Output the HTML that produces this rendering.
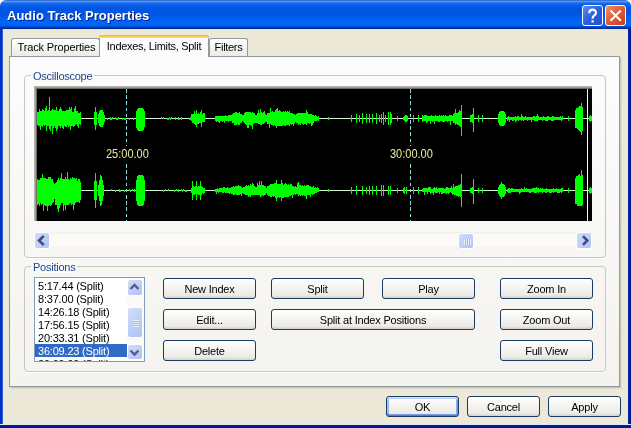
<!DOCTYPE html>
<html><head><meta charset="utf-8">
<style>
*{margin:0;padding:0;box-sizing:border-box}
html,body{width:631px;height:428px;overflow:hidden;background:#FFFFFF;font-family:"Liberation Sans",sans-serif;font-size:11px;color:#000}
.a{position:absolute}
#win{position:absolute;left:0;top:0;width:631px;height:428px;background:transparent;will-change:transform}
#title{left:0;top:0;width:631px;height:29px;border-radius:6px 6px 0 0;
 background:linear-gradient(to bottom,#14409E 0px,#5BA0FF 1px,#3C8AF8 2px,#166CF0 3px,#0A5FE8 5px,#0055E3 8px,#0055E3 14px,#0060F2 19px,#0066FB 23px,#005DF0 26px,#0045C4 27px,#002F9C 28px,#002F9C 29px)}
#ttext{left:7px;top:8px;color:#fff;font-weight:bold;font-size:13px;letter-spacing:0px;text-shadow:1px 1px 0 #0A1E78;white-space:nowrap}
#body{left:4px;top:29px;width:623px;height:395px;background:#ECE9D8;border-top:1px solid #D8E4F8}
#lb{left:0;top:29px;width:4px;height:399px;background:linear-gradient(to right,#0032C4 0,#0036C8 2px,#2E5CD6 2px,#2E5CD6 3px,#D8ECFC 3px)}
#rb{left:627px;top:29px;width:4px;height:399px;background:linear-gradient(to right,#DCEBFC 0,#DCEBFC 1px,#0A2AB0 1px,#0A22A0 2px,#001A90 3px)}
#bb{left:0;top:424px;width:631px;height:4px;background:linear-gradient(to bottom,#DCEBFC 0,#DCEBFC 1px,#0A1E90 1px,#001884 4px)}
.tbtn{width:21px;height:21px;border:1px solid #fff;border-radius:3px}
.tab{letter-spacing:-0.3px;height:18px;border:1px solid #919B9C;border-bottom:none;border-radius:3px 3px 0 0;background:linear-gradient(#FFFFFF,#F3F3EF 60%,#ECEBE5);text-align:center;white-space:nowrap;padding-top:2px}
#panel{left:9px;top:56px;width:611px;height:331px;border:1px solid #919B9C;box-shadow:1px 1px 0 #C9C7BD,2px 2px 0 #DEDCD0;background:linear-gradient(to bottom,#FCFCFE,#F4F3EE)}
.grp{border:1px solid #C9C7BA;border-radius:4px;box-shadow:0 1px 0 #FFFFFF}
.glabel{color:#1E4590;background:#FAFAF9;padding:0 2px 0 2px;white-space:nowrap;letter-spacing:-0.25px}
.btn{height:21px;border:1px solid #1C3A62;border-radius:3px;background:linear-gradient(to bottom,#FFFFFF,#F5F5F2 40%,#ECEBE6 85%,#D6D0C5);text-align:center;white-space:nowrap;line-height:21px;letter-spacing:-0.2px}
.sbb{width:15px;height:17px;border:1px solid #fff;border-radius:3px;background:linear-gradient(135deg,#D0DDFB,#BCCDF8 60%,#AFC3F2)}
.lst{height:13px;line-height:15px;padding-left:3px;position:relative;top:1px;white-space:nowrap;letter-spacing:-0.2px}
.sel{background:#316AC5;color:#fff}
.def{border-color:#1C3A62;box-shadow:inset 0 1px 0 #CCE0FA,inset 0 2px 0 #BCD4F8,inset 0 -1px 0 #5A78D8,inset 0 -2px 0 #7E9AE6,inset 1px 0 0 #A8C6F4,inset 2px 0 0 #98B8F0,inset -1px 0 0 #7090E4,inset -2px 0 0 #90AEEC}
.tl{color:#ECEC9C;font-size:11px;white-space:nowrap;line-height:13px;transform:scaleY(1.13);transform-origin:0 0;will-change:transform}
</style></head><body>
<div id="win">
 <div id="title" class="a"></div>
 <div id="ttext" class="a">Audio Track Properties</div>
 <div class="a tbtn" style="left:582px;top:5px;background:linear-gradient(135deg,#5C8CF2,#2A5FE0 50%,#2050D0)"><svg width="19" height="19" style="position:absolute;left:0;top:0"><path d="M6.2 7.2C6.2 4.8 7.8 3.6 9.6 3.6C11.6 3.6 13 4.8 13 6.7C13 8.4 11.8 9.1 10.8 9.8C10 10.3 9.6 10.9 9.6 12.2V12.8" stroke="#fff" stroke-width="2.1" fill="none"/><rect x="8.5" y="14.3" width="2.2" height="2.2" fill="#fff"/></svg></div>
 <div class="a tbtn" style="left:605px;top:5px;background:linear-gradient(135deg,#F09070,#E05A30 50%,#C84020)"><svg width="19" height="19" style="position:absolute;left:0;top:0"><path d="M4.5 4.5L14.8 14.8M14.8 4.5L4.5 14.8" stroke="#fff" stroke-width="2.1" fill="none"/></svg></div>
 <div id="lb" class="a"></div><div id="rb" class="a"></div><div id="bb" class="a"></div>
 <div id="body" class="a"></div>
 <div id="panel" class="a"></div>
 <div class="a tab" style="left:11px;top:38px;width:89px;letter-spacing:-0.15px;padding-left:2px">Track Properties</div>
 <div class="a tab" style="left:209px;top:38px;width:39px;">Filters</div>
 <div class="a" style="left:99px;top:35px;width:110px;height:22px;background:#FCFCFE;border-left:1px solid #919B9C;border-right:1px solid #919B9C;border-radius:3px 3px 0 0"></div><div class="a" style="left:99px;top:35px;width:110px;height:3px;border-radius:3px 3px 0 0;background:linear-gradient(to bottom,#F2B56A 0,#F2B56A 1px,#F8C848 1px,#F8C848 2px,#FAD98A 2px)"></div><div class="a" style="left:100px;top:40px;width:108px;text-align:center;white-space:nowrap;letter-spacing:-0.3px">Indexes, Limits, Split</div>

 <!-- Oscilloscope group -->
 <div class="a grp" style="left:24px;top:75px;width:582px;height:183px"></div>
 <div class="a glabel" style="left:31px;top:70px;">Oscilloscope</div>
 <div class="a" style="left:34px;top:86px;width:558px;height:135px;border-top:1px solid #B4B3AC;border-left:1px solid #B4B3AC;background:#000;box-shadow:inset 1px 1px 0 #9C9B94,inset 2px 2px 0 #6E6D68"></div>
 <div id="scope" class="a" style="left:37px;top:89px;width:555px;height:132px;overflow:hidden"><svg width="555" height="132" style="position:absolute;left:0;top:0" shape-rendering="crispEdges">
<path d="M0 29.5H555M0 101.5H555" stroke="#D4F2D4" stroke-width="1"/>
<path d="M0 23v13M1 23v14M2 20v17M3 22v19M4 22v15M5 20v18M6 21v15M7 22v15M8 19v17M9 17v25M10 22v15M11 21v16M12 8v32M13 22v20M14 21v16M15 20v25M16 21v18M17 21v16M18 21v18M19 18v24M20 22v18M21 22v15M22 20v17M23 18v21M24 20v17M25 22v17M26 22v18M27 22v15M28 22v16M29 21v17M30 21v15M31 21v17M32 18v19M33 20v21M34 18v19M35 23v14M36 23v15M37 19v18M38 17v19M39 22v13M40 22v15M41 24v15M42 24v11M43 23v13M57 23v13M58 18v23M59 23v13M61 25v9M62 22v15M63 21v17M64 21v17M65 21v17M66 23v13M67 26v7M70 29v2M73 28v3M74 29v2M75 28v2M78 28v2M79 29v2M80 29v2M81 28v2M85 29v2M87 29v2M88 29v2M92 29v2M96 29v2M99 22v17M100 20v21M101 19v23M102 19v23M103 19v23M104 19v23M105 19v23M106 20v21M107 22v16M124 28v2M126 28v2M130 29v2M131 29v2M132 28v2M133 29v2M134 28v2M138 28v3M141 28v3M142 29v2M144 28v3M152 29v2M153 28v3M154 25v7M155 25v9M156 25v9M157 22v13M158 25v11M159 21v17M160 25v10M161 24v11M162 25v9M163 23v11M164 21v17M165 25v8M166 24v9M167 24v9M178 27v5M179 27v6M180 27v5M181 27v6M182 27v7M183 27v5M184 27v5M185 27v6M186 27v5M187 27v7M188 26v6M189 27v5M190 27v5M191 26v7M192 26v6M193 26v6M194 26v6M195 25v9M196 24v10M197 24v12M198 23v13M199 23v13M200 24v11M201 24v12M202 23v13M203 25v9M204 25v9M205 26v6M206 26v7M207 24v10M208 23v12M209 23v13M210 23v16M211 23v16M212 23v13M213 23v13M214 24v13M215 23v17M216 24v11M217 24v10M218 26v8M219 26v8M220 24v10M221 21v14M222 24v11M223 20v16M224 23v13M225 24v11M226 23v12M227 22v12M228 25v8M229 26v7M230 24v11M231 24v11M232 24v15M233 19v16M234 23v13M235 22v14M236 23v14M237 23v13M238 21v16M239 20v19M240 19v18M241 22v15M242 21v16M243 22v15M244 23v14M245 23v14M246 22v14M247 23v14M248 22v15M249 23v13M250 22v14M251 23v13M252 22v15M253 24v11M254 24v12M255 24v11M256 25v12M257 25v10M258 26v7M259 25v9M260 24v10M261 24v12M262 24v11M263 24v12M264 24v10M265 24v11M266 24v12M267 24v11M268 24v11M269 21v15M270 23v11M271 25v9M272 25v10M273 25v9M274 25v12M275 26v10M276 26v8M277 27v5M278 26v6M279 27v5M280 28v3M281 27v5M291 28v3M314 26v7M319 25v9M322 26v7M325 24v11M329 25v9M332 25v9M335 25v9M339 24v11M342 26v7M344 25v9M346 23v13M348 26v7M351 23v13M353 23v13M354 25v9M360 27v5M366 28v3M367 27v5M368 26v7M369 26v7M370 27v5M376 26v7M381 26v7M385 26v7M386 27v5M387 26v6M388 26v6M389 26v8M390 27v6M391 27v5M392 27v5M393 27v8M394 26v6M395 27v6M396 27v5M397 27v8M398 26v6M399 27v5M400 27v5M401 27v6M402 26v7M403 27v5M404 26v6M405 27v6M406 26v7M407 27v6M408 26v6M409 27v5M410 27v6M411 27v5M412 26v6M413 26v10M414 26v6M415 27v5M416 25v9M417 24v10M418 20v16M419 24v11M420 24v12M421 23v13M422 21v16M423 22v16M424 16v31M433 26v7M434 26v7M435 25v9M436 19v24M441 26v7M445 26v7M461 25v9M462 23v13M463 22v15M464 22v15M465 22v15M466 22v15M467 23v13M468 25v9M470 28v4M471 27v4M472 28v5M473 28v3M474 28v3M475 28v4M476 28v4M477 28v3M478 27v6M479 28v4M480 27v4M481 27v5M482 28v3M483 28v3M484 25v7M485 27v4M486 28v4M487 28v3M488 27v4M489 28v3M490 28v4M491 28v3M492 28v3M493 28v3M494 28v5M495 28v3M496 27v4M497 27v5M498 28v4M499 27v5M500 25v7M501 27v4M502 28v3M503 28v3M504 28v3M505 28v4M506 27v4M507 28v3M508 28v4M509 28v4M510 27v5M511 27v4M512 28v3M513 28v3M514 28v4M515 27v5M516 27v5M517 28v3M518 28v3M519 28v3M520 28v3M521 28v3M522 28v3M523 27v4M524 28v4M525 27v4M531 27v5M538 21v18M539 19v20M540 19v21M541 18v23M542 17v25M543 17v26M544 14v32M545 18v24M552 27v5M553 26v7M554 27v5M0 90v26M1 91v24M2 91v26M3 89v25M4 89v27M5 85v30M6 89v33M7 89v27M8 89v28M9 90v27M10 90v32M11 88v29M12 88v28M13 88v29M14 90v26M15 90v24M16 93v20M17 95v15M18 94v22M19 93v23M20 91v29M21 89v34M22 91v28M23 89v27M24 84v30M25 90v24M26 90v32M27 90v26M28 88v33M29 90v26M30 83v33M31 90v26M32 91v24M33 89v25M34 90v26M35 88v27M36 89v32M37 89v27M38 90v24M39 89v24M40 92v21M41 90v23M42 90v24M43 93v18M57 92v19M58 84v35M59 92v19M61 96v11M62 91v21M63 86v31M64 87v29M65 91v21M66 96v11M74 100v2M78 101v2M82 100v3M83 101v2M87 101v2M92 100v2M93 101v2M95 100v2M97 100v3M99 91v21M100 87v29M101 86v31M102 86v31M103 86v31M104 86v31M105 86v31M106 87v29M107 91v21M126 101v2M128 100v2M131 100v2M137 101v2M139 100v2M141 100v3M144 100v2M145 101v2M146 100v2M148 101v2M149 101v2M154 99v5M155 92v19M156 97v9M157 98v8M158 97v8M159 92v19M160 98v7M161 97v9M162 97v9M163 92v19M164 97v9M165 98v6M166 99v6M167 99v5M178 100v3M179 100v5M180 99v4M181 100v4M182 99v4M183 99v4M184 99v4M185 99v5M186 98v6M187 98v5M188 99v5M189 99v5M190 98v6M191 99v5M192 99v6M193 99v5M194 98v7M195 98v7M196 97v9M197 98v8M198 97v8M199 97v9M200 97v9M201 96v10M202 97v9M203 97v8M204 98v9M205 99v5M206 98v7M207 98v7M208 97v9M209 96v10M210 97v9M211 96v12M212 97v10M213 95v13M214 96v10M215 94v12M216 95v11M217 97v9M218 98v8M219 98v8M220 94v12M221 96v10M222 92v14M223 96v12M224 92v15M225 96v10M226 96v11M227 97v9M228 97v9M229 99v5M230 97v9M231 97v10M232 96v11M233 95v13M234 95v13M235 95v12M236 95v13M237 94v13M238 94v15M239 91v21M240 95v14M241 95v13M242 95v14M243 95v13M244 91v21M245 94v15M246 96v13M247 95v13M248 94v14M249 95v13M250 96v12M251 95v13M252 96v11M253 95v12M254 95v11M255 97v12M256 97v9M257 98v7M258 97v9M259 98v7M260 94v11M261 93v14M262 96v10M263 96v11M264 97v9M265 96v11M266 97v9M267 96v11M268 97v10M269 96v14M270 96v10M271 96v10M272 97v9M273 97v11M274 98v7M275 98v8M276 97v8M277 99v6M278 98v6M279 99v5M280 98v5M281 99v4M291 100v3M314 98v7M319 97v9M325 97v9M329 98v7M332 97v9M335 97v9M339 97v9M344 96v11M346 96v11M351 97v9M353 97v9M360 99v5M366 99v5M367 98v7M369 98v7M376 98v7M381 98v7M385 100v3M386 99v4M387 99v7M388 99v4M389 99v4M390 99v6M391 98v5M392 98v5M393 98v7M394 100v4M395 100v4M396 99v7M397 98v5M398 99v5M399 98v6M400 100v4M401 99v4M402 99v6M403 99v4M404 99v6M405 99v6M406 99v5M407 100v4M408 99v5M409 98v7M410 98v6M411 99v6M412 99v5M413 99v4M414 97v7M415 99v7M416 95v10M417 98v8M418 97v9M419 97v10M420 97v10M421 96v12M422 96v11M423 95v13M424 85v33M433 99v5M434 99v5M435 98v7M436 90v25M441 99v5M445 99v5M461 98v7M462 96v11M463 95v13M464 93v17M465 95v13M466 95v13M467 96v11M468 98v7M470 100v3M471 99v5M472 99v5M473 100v4M474 99v4M475 99v4M476 100v3M477 100v3M478 100v3M479 100v3M480 100v3M481 100v3M482 100v5M483 100v4M484 99v4M485 100v3M486 100v3M487 98v5M488 100v3M489 99v4M490 100v3M491 100v3M492 100v4M493 100v4M494 100v3M495 99v4M496 99v4M497 99v5M498 99v5M499 98v6M500 99v4M501 99v5M502 100v3M503 99v4M504 100v3M505 99v5M506 100v3M507 100v3M508 100v4M509 99v5M510 100v3M511 100v3M512 100v4M513 100v4M514 100v4M515 100v3M516 99v5M517 100v3M518 100v3M519 99v4M520 100v4M521 100v4M522 100v4M523 100v3M524 99v5M525 99v4M531 99v5M538 89v26M539 87v28M540 87v30M541 86v31M542 85v32M543 87v30M544 81v36M545 86v30M552 99v5M553 98v7M554 99v5" stroke="#00FF00" stroke-width="1" transform="translate(0.5 0)"/>
<path d="M89.5 0V57M89.5 75V132M373.5 0V57M373.5 75V132" stroke="#8ED8DC" stroke-width="1" stroke-dasharray="3.5 2.7"/>
<path d="M550.5 0V132" stroke="#F4F4F4" stroke-width="1"/>
</svg>
  <div class="a tl" style="left:69px;top:58px">25:00.00</div>
  <div class="a tl" style="left:353px;top:58px">30:00.00</div>
 </div>
 <!-- scrollbar -->
 <div class="a" style="left:35px;top:232px;width:557px;height:17px;background:linear-gradient(to bottom,#F1EFE6,#FBFAF6 3px,#FBFAF6 14px,#F2F1EA)"></div>
 <div class="a sbb" style="left:34px;top:232px;width:16px"><svg width="15" height="17" style="position:absolute;left:0;top:0"><path d="M8.8 3 L4 7.5 L8.8 12" stroke="#3F4F7C" stroke-width="2.6" fill="none"/></svg></div>
 <div class="a sbb" style="left:458px;top:233px;width:16px;height:16px"><svg width="16" height="16"><path d="M5.5 5V11M7.5 5V11M9.5 5V11M11.5 5V11" stroke="#EEF4FE" stroke-width="1"/><path d="M6.5 5V11M8.5 5V11M10.5 5V11" stroke="#9DB4E8" stroke-width="1"/></svg></div>
 <div class="a sbb" style="left:576px;top:232px;width:16px"><svg width="15" height="17" style="position:absolute;left:0;top:0"><path d="M6 3.2 L10.3 7.5 L6 11.8" stroke="#3F4F7C" stroke-width="2.6" fill="none"/></svg></div>
 <!-- Positions group -->
 <div class="a grp" style="left:24px;top:266px;width:582px;height:106px"></div>
 <div class="a glabel" style="left:31px;top:261px;">Positions</div>
 <div class="a" style="left:34px;top:277px;width:111px;height:85px;border:1px solid #7F9DB9;background:#fff;overflow:hidden">
  <div class="lst">5:17.44 (Split)</div>
  <div class="lst">8:37.00 (Split)</div>
  <div class="lst">14:26.18 (Split)</div>
  <div class="lst">17:56.15 (Split)</div>
  <div class="lst">20:33.31 (Split)</div>
  <div class="lst sel">36:09.23 (Split)</div>
  <div class="lst">39:09.99 (Split)</div>
 </div>
 <div class="a" style="left:127px;top:278px;width:17px;height:83px;background:#FBFAF6"></div>
 <div class="a sbb" style="left:127px;top:279px;width:16px;height:17px"><svg width="16" height="17" style="position:absolute;left:-1px;top:-1px"><path d="M3.5 10 L7.5 6 L11.5 10" stroke="#4D6185" stroke-width="2.4" fill="none"/></svg></div>
 <div class="a sbb" style="left:127px;top:307px;width:16px;height:31px"><svg width="16" height="31"><path d="M5 12.5H11M5 14.5H11M5 16.5H11M5 18.5H11" stroke="#EEF4FE" stroke-width="1"/><path d="M5 13.5H11M5 15.5H11M5 17.5H11" stroke="#9DB4E8" stroke-width="1"/></svg></div>
 <div class="a sbb" style="left:127px;top:344px;width:16px;height:16px"><svg width="16" height="16" style="position:absolute;left:-1px;top:-1px"><path d="M3.5 6.5 L7.5 10.5 L11.5 6.5" stroke="#4D6185" stroke-width="2.4" fill="none"/></svg></div>
 <div class="a btn" style="left:163px;top:278px;width:93px;">New Index</div>
 <div class="a btn" style="left:163px;top:309px;width:93px;">Edit...</div>
 <div class="a btn" style="left:163px;top:340px;width:93px;">Delete</div>
 <div class="a btn" style="left:271px;top:278px;width:93px;">Split</div>
 <div class="a btn" style="left:271px;top:309px;width:204px;">Split at Index Positions</div>
 <div class="a btn" style="left:382px;top:278px;width:93px;">Play</div>
 <div class="a btn" style="left:500px;top:278px;width:93px;">Zoom In</div>
 <div class="a btn" style="left:500px;top:309px;width:93px;">Zoom Out</div>
 <div class="a btn" style="left:500px;top:340px;width:93px;">Full View</div>
 <div class="a btn def" style="left:386px;top:396px;width:73px;">OK</div>
 <div class="a btn" style="left:467px;top:396px;width:73px;">Cancel</div>
 <div class="a btn" style="left:548px;top:396px;width:73px;">Apply</div>
</div>
</body></html>
